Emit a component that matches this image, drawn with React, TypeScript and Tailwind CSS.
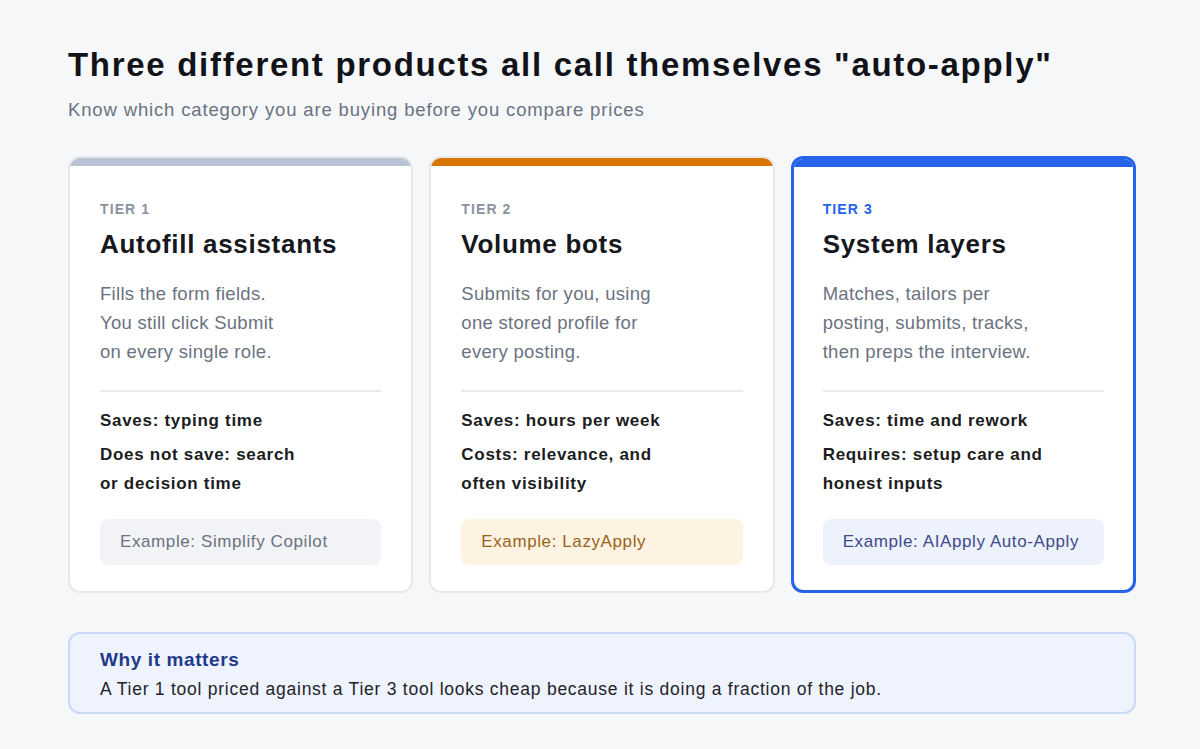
import React from "react"

type Tier = {
  tier: string
  title: string
  desc: string[]
  points: string[][]
  example: string
  bar: string
  border: string
  label: string
  pad: string
  exampleBox: string
}

const tiers: Tier[] = [
  {
    tier: "TIER 1",
    title: "Autofill assistants",
    desc: ["Fills the form fields.", "You still click Submit", "on every single role."],
    points: [["Saves: typing time"], ["Does not save: search", "or decision time"]],
    example: "Example: Simplify Copilot",
    bar: "bg-[#b8c3d3]",
    border: "border-2 border-[#e6e8ec]",
    label: "text-[#8b93a1]",
    pad: "px-[30px] pt-[33px] pb-[26px]",
    exampleBox: "bg-[#f2f3f6] text-[#6b7280]",
  },
  {
    tier: "TIER 2",
    title: "Volume bots",
    desc: ["Submits for you, using", "one stored profile for", "every posting."],
    points: [["Saves: hours per week"], ["Costs: relevance, and", "often visibility"]],
    example: "Example: LazyApply",
    bar: "bg-[#d97706]",
    border: "border-2 border-[#e6e8ec]",
    label: "text-[#8b93a1]",
    pad: "px-[30px] pt-[33px] pb-[26px]",
    exampleBox: "bg-[#fef3e3] text-[#9a6418]",
  },
  {
    tier: "TIER 3",
    title: "System layers",
    desc: ["Matches, tailors per", "posting, submits, tracks,", "then preps the interview."],
    points: [["Saves: time and rework"], ["Requires: setup care and", "honest inputs"]],
    example: "Example: AIApply Auto-Apply",
    bar: "bg-[#2563eb]",
    border: "border-[3px] border-[#2563eb]",
    label: "text-[#2563eb]",
    pad: "px-[29px] pt-[32px] pb-[25px]",
    exampleBox: "bg-[#eef2fc] text-[#3d4a8a]",
  },
]

function TierCard({ t }: { t: Tier }) {
  return (
    <div className={`flex flex-col rounded-xl overflow-hidden bg-white ${t.border}`}>
      <div className={`h-2 shrink-0 ${t.bar}`} />
      <div className={`flex flex-col ${t.pad}`}>
        <div className={`text-[14px] leading-5 font-bold tracking-[1.1px] ${t.label}`}>{t.tier}</div>
        <h2 className="mt-[9px] text-[26px] leading-8 font-bold tracking-[0.7px] text-[#16181d]">{t.title}</h2>
        <div className="mt-[19px] text-[18.5px] leading-[29px] tracking-[0.3px] text-[#6b7280]">
          {t.desc.map((d) => (
            <div key={d}>{d}</div>
          ))}
        </div>
        <div className="mt-6 h-0.5 bg-[#e8eaee]" />
        <div className="mt-[14px] flex flex-col gap-[5px] text-[17px] leading-[29px] font-bold tracking-[0.7px] text-[#1b1d22]">
          {t.points.map((p) => (
            <div key={p[0]}>
              {p.map((line) => (
                <div key={line}>{line}</div>
              ))}
            </div>
          ))}
        </div>
        <div
          className={`mt-[21px] h-[46px] flex items-center rounded-lg px-5 text-[17px] tracking-[0.6px] ${t.exampleBox}`}
        >
          {t.example}
        </div>
      </div>
    </div>
  )
}

export default function App() {
  return (
    <div
      className="min-h-screen w-full bg-[#f6f7f9] pl-[68px] pr-[64px] pt-[45px]"
      style={{ fontFamily: '"Liberation Sans", Arial, sans-serif' }}
    >
      <h1 className="text-[33px] leading-10 font-bold tracking-[1.7px] text-[#111318]">
        Three different products all call themselves "auto-apply"
      </h1>
      <p className="mt-3 text-[18.5px] leading-[26px] tracking-[0.85px] text-[#6b7280]">
        Know which category you are buying before you compare prices
      </p>

      <div className="mt-[33px] grid grid-cols-3 gap-4">
        {tiers.map((t) => (
          <TierCard key={t.tier} t={t} />
        ))}
      </div>

      <div className="mt-[39px] rounded-xl border-2 border-[#c9d9f6] bg-[#eef3fd] px-[30px] pt-[13px] pb-[8px]">
        <div className="text-[19px] leading-[26px] font-bold tracking-[0.6px] text-[#1e3a8a]">Why it matters</div>
        <div className="mt-[2px] text-[17.5px] leading-[29px] tracking-[0.75px] text-[#1f2329]">
          A Tier 1 tool priced against a Tier 3 tool looks cheap because it is doing a fraction of the job.
        </div>
      </div>
    </div>
  )
}
